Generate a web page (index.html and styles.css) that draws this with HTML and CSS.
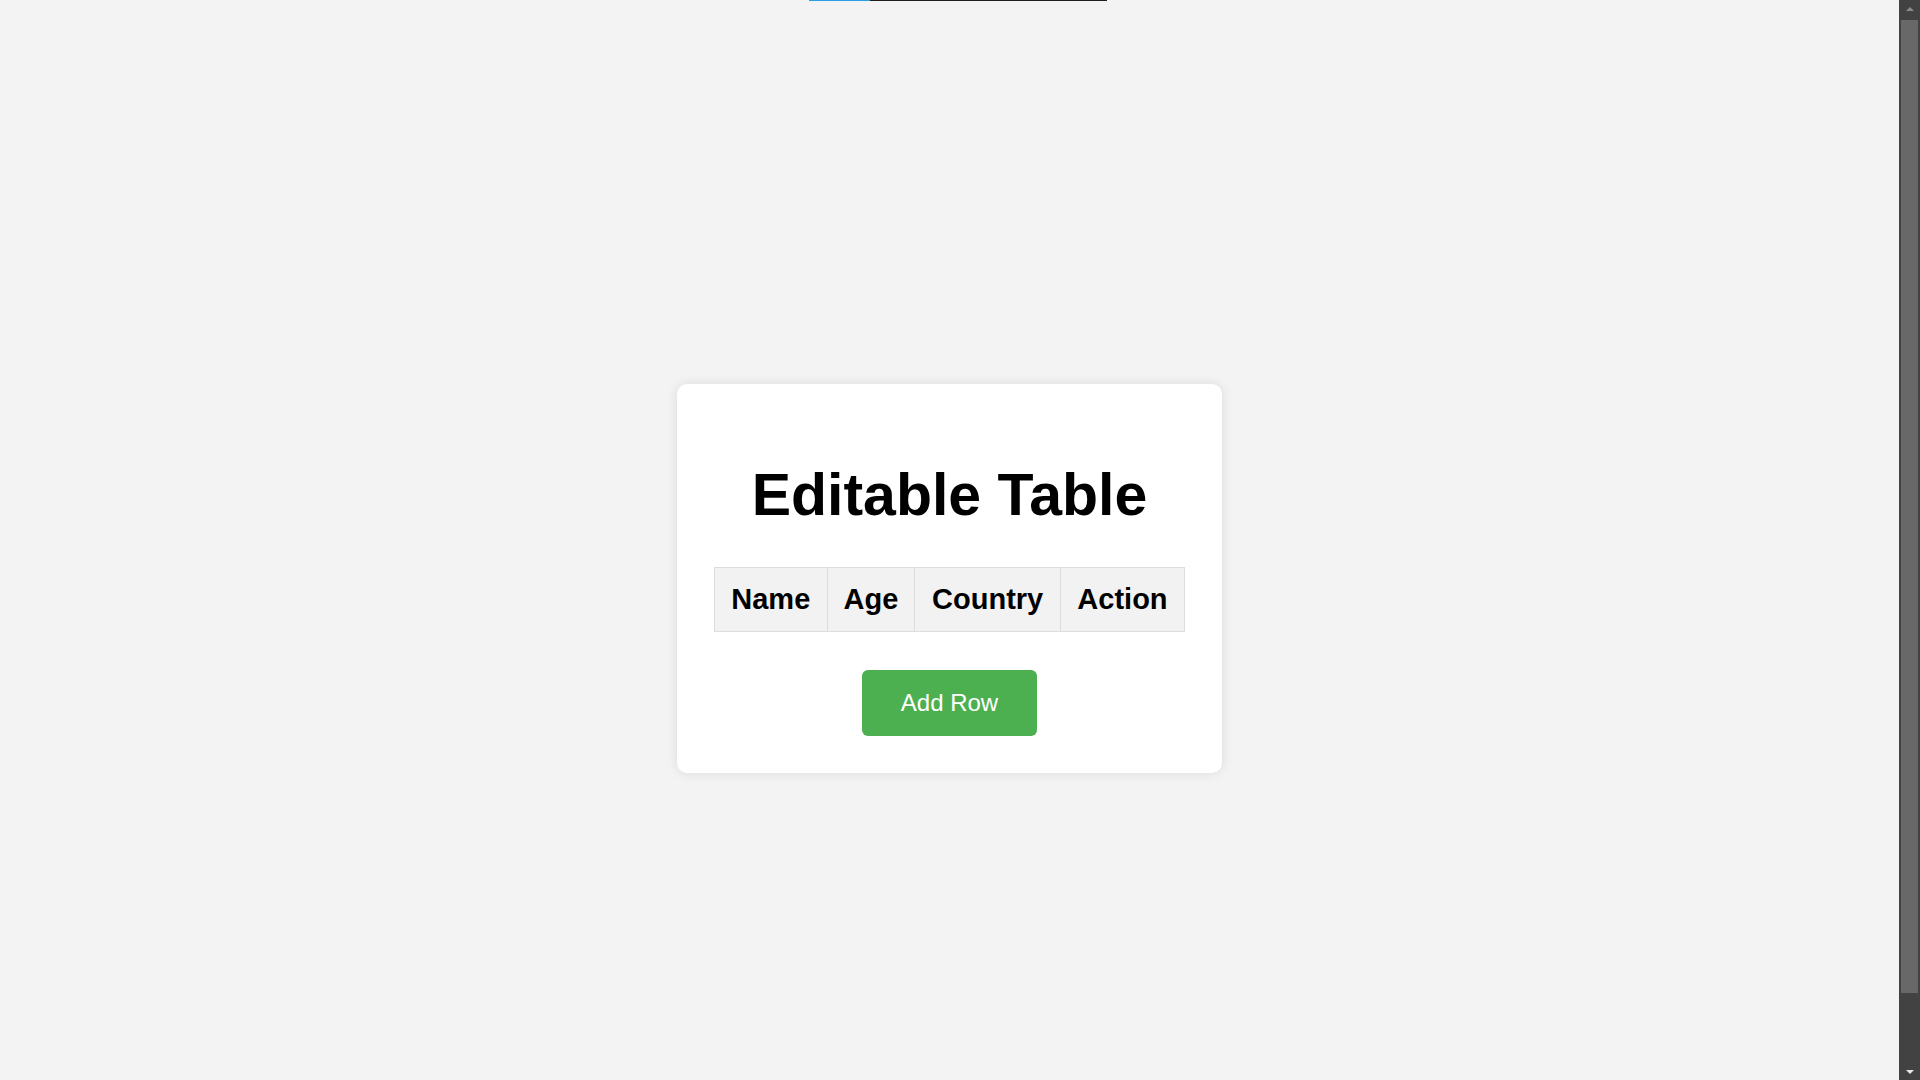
FILE: index.html
```html
<!DOCTYPE html>
<html lang="en">
    <head>
        <meta charset="UTF-8">
        <title>Editable Table</title>
        <link rel="stylesheet" href="styles.css">
    </head>
    <body>
        <div class="loader">
            <span class="loader-done"></span>
            <span class="loader-rest"></span>
        </div>
        <div class="container">
            <h1>Editable Table</h1>
            <table id="dataTable">
                <thead>
                    <tr>
                        <th>Name</th>
                        <th>Age</th>
                        <th>Country</th>
                        <th>Action</th>
                    </tr>
                </thead>
                <tbody></tbody>
            </table>
            <div class="actions">
                <button class="add-btn" type="button">Add Row</button>
            </div>
        </div>
        <div class="scrollbar">
            <span class="sb-arrow up"></span>
            <div class="sb-track"><span class="sb-thumb"></span></div>
            <span class="sb-arrow down"></span>
        </div>
    </body>
</html>
```

FILE: styles.css
```css
body{
    margin: 0 21px 0 0;
    padding: 38px 0;
    height: 100vh;
    display: flex;
    justify-content: center;
    align-items: center;
    background: #f3f3f3;
    color: #000;
    font-family: "Liberation Sans", Arial, sans-serif;
}
.loader{
    position: absolute;
    top: 0;
    left: 809px;
    width: 298px;
    height: 1px;
    display: flex;
}
.loader-done{
    width: 61px;
    background: #2d9ce8;
}
.loader-rest{
    flex: 1;
    background: #1e1e1e;
}
.container{
    width: 471px;
    padding: 37px;
    background: #fff;
    border-radius: 10px;
    box-shadow: 0 0 12px rgba(0, 0, 0, 0.1);
}
h1{
    margin: 40px 0 38px;
    font-size: 59px;
    line-height: 68px;
    text-align: center;
}
table{
    width: 100%;
    border-collapse: collapse;
}
th{
    padding: 15px;
    border: 1px solid #ddd;
    background: #f2f2f2;
    font-size: 29px;
    line-height: 33px;
}
.actions{
    margin-top: 38px;
    text-align: center;
}
.add-btn{
    padding: 19px 39px;
    border: 0;
    border-radius: 6px;
    background: #4caf50;
    color: #fff;
    font-family: "Liberation Sans", Arial, sans-serif;
    font-size: 24px;
    line-height: 28px;
    cursor: pointer;
}

/* window scrollbar */
.scrollbar{
    position: fixed;
    top: 0;
    right: 0;
    bottom: 0;
    width: 21px;
    display: flex;
    flex-direction: column;
    background: #424242;
}
.sb-arrow{
    height: 17px;
    display: flex;
    justify-content: center;
    align-items: center;
}
.sb-arrow::before{
    content: "";
    border-left: 4px solid transparent;
    border-right: 4px solid transparent;
}
.sb-arrow.up::before{
    border-bottom: 4px solid #8a8a8a;
}
.sb-arrow.down::before{
    border-top: 4px solid #e8e8e8;
}
.sb-track{
    flex: 1;
    padding: 3px 2px 70px;
    display: flex;
}
.sb-thumb{
    flex: 1;
    background: #686868;
}
```
